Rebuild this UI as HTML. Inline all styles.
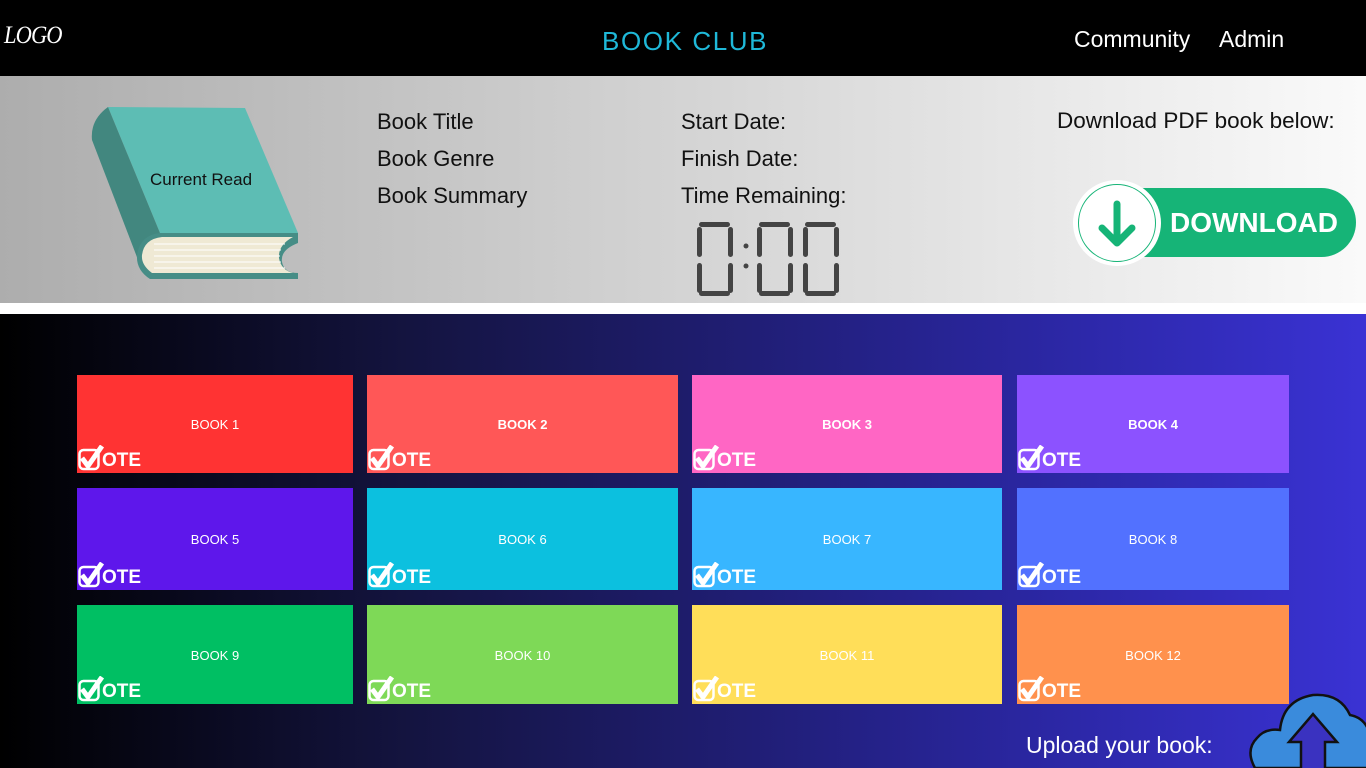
<!DOCTYPE html>
<html><head><meta charset="utf-8"><style>
*{margin:0;padding:0;box-sizing:border-box}
body{width:1366px;height:768px;overflow:hidden;position:relative;font-family:"Liberation Sans",sans-serif;background:#fff}
.hdr{position:absolute;left:0;top:0;width:1366px;height:76px;background:#000}
.band{position:absolute;left:0;top:76px;width:1366px;height:227px;background:linear-gradient(90deg,#adadad,#d0d0d0 45%,#fafafa)}
.dark{position:absolute;left:0;top:314px;width:1366px;height:454px;background:linear-gradient(90deg,#000 0%,#141440 30%,#2a26a0 75%,#3a32d4 100%)}
.t{position:absolute;white-space:nowrap}
.card{position:absolute;color:#fff;font-size:13px}
.card .n{position:absolute;left:0;right:0;text-align:center}
.vote{position:absolute;left:1px;bottom:2px;font-weight:bold;font-size:19px;display:flex;align-items:flex-end}
.vote svg{margin-right:-2px}
</style></head><body>
<div class="hdr"></div>
<div class="t" style="left:4px;top:22px;color:#fff;font-family:'Liberation Serif',serif;font-style:italic;font-size:25px;font-weight:100;letter-spacing:-1px;transform:scaleX(0.9);transform-origin:left">LOGO</div>
<div class="t" style="left:602px;top:26px;color:#1fb8d8;font-size:26px;letter-spacing:1.6px">BOOK CLUB</div>
<div class="t" style="left:1074px;top:26px;color:#fff;font-size:23px">Community</div>
<div class="t" style="left:1219px;top:26px;color:#fff;font-size:23px">Admin</div>
<div class="band"></div>
<svg style="position:absolute;left:88px;top:104px" width="215" height="180" viewBox="88 104 215 180">
<path d="M108 107 L245 108 L298 233 L160 233 Z" fill="#5dbdb4"/>
<path d="M108 107 Q90 120 92 140 L140 265 Q145 278 158 279 L160 233 Z" fill="#42877f"/>
<path d="M160 233 L298 233 L298 243 Q280 250 282 262 Q284 273 298 273 L298 279 L150 279 Q136 270 137 255 Q140 235 160 233 Z" fill="#468d86"/>
<path d="M162 237 L293 237 Q278 245 279 258 Q281 270 293 273 L152 273 Q141 265 142 255 Q144 239 162 237 Z" fill="#efe9d4"/>
<g stroke="#fff" stroke-width="1"><line x1="154" y1="244" x2="285" y2="244"/><line x1="154" y1="250" x2="281" y2="250"/><line x1="154" y1="256" x2="280" y2="256"/><line x1="154" y1="262" x2="281" y2="262"/><line x1="154" y1="268" x2="285" y2="268"/></g>
<text x="150" y="185" font-family="Liberation Sans" font-size="17" fill="#111">Current Read</text>
</svg>
<div class="t" style="left:377px;top:103px;font-size:22px;color:#111;line-height:37px">Book Title<br>Book Genre<br>Book Summary</div>
<div class="t" style="left:681px;top:103px;font-size:22px;color:#111;line-height:37px">Start Date:<br>Finish Date:<br>Time Remaining:</div>
<div class="t" style="left:1057px;top:108px;font-size:22.5px;color:#111">Download PDF book below:</div>
<svg style="position:absolute;left:695px;top:220px" width="152" height="80" viewBox="0 0 152 80" fill="#444">
<defs><g id="d"><rect x="4" y="2" width="31" height="5" rx="2.5"/><rect x="2" y="7" width="5" height="30" rx="2.5"/><rect x="2" y="43" width="5" height="30" rx="2.5"/><rect x="4" y="71" width="31" height="5" rx="2.5"/><rect x="33" y="7" width="5" height="30" rx="2.5"/><rect x="33" y="43" width="5" height="30" rx="2.5"/></g></defs>
<use href="#d"/>
<circle cx="51" cy="26" r="2.5"/><circle cx="51" cy="46" r="2.5"/>
<use href="#d" x="60"/>
<use href="#d" x="106"/>
</svg>
<div style="position:absolute;left:1110px;top:188px;width:246px;height:69px;background:#16b477;border-radius:35px"></div>
<div style="position:absolute;left:1073px;top:180px;width:88px;height:86px;border-radius:50%;background:#fff"></div>
<div style="position:absolute;left:1078px;top:184px;width:78px;height:78px;border-radius:50%;border:1px solid #16b477"></div>
<svg style="position:absolute;left:1096px;top:200px" width="42" height="50" viewBox="0 0 42 50"><path d="M21 4 V42 M6 28 L21 43 L36 28" stroke="#16b477" stroke-width="7" fill="none" stroke-linecap="round" stroke-linejoin="round"/></svg>
<div class="t" style="left:1170px;top:207px;color:#fff;font-weight:bold;font-size:28px">DOWNLOAD</div>
<div class="dark"></div>

<div id="cards"></div>
<div class="t" style="left:1026px;top:732px;color:#fff;font-size:23px">Upload your book:</div>
<svg style="position:absolute;left:1245px;top:690px" width="121" height="78" viewBox="0 0 121 78">
<path d="M10 78 Q0 60 12 48 Q20 38 35 40 Q38 10 68 5 Q95 3 105 25 Q121 28 125 45 L125 78 Z" fill="#3a8bdc" stroke="#111" stroke-width="2.5"/>
<path d="M56 78 V52 H44 L68 24 L92 52 H80 V78" fill="#3a32c0" stroke="#111" stroke-width="2.5"/>
</svg>
<script>
var cols=[[77,276],[367,311],[692,310],[1017,272]],rows=[[375,98],[488,102],[605,99]];
var colors=["#ff3333","#ff5757","#ff66c4","#8c52ff","#5e17eb","#0cc0df","#38b6ff","#5271ff","#00bf63","#7ed957","#ffde59","#ff914d"];
var bold=[0,1,1,1,0,0,0,0,0,0,0,0];
var h="";
for(var r=0;r<3;r++)for(var c=0;c<4;c++){var i=r*4+c;
h+='<div class="card" style="left:'+cols[c][0]+'px;top:'+rows[r][0]+'px;width:'+cols[c][1]+'px;height:'+rows[r][1]+'px;background:'+colors[i]+'"><div class="n" style="top:'+(rows[r][1]/2-7)+'px;'+(bold[i]?'font-weight:bold':'')+'">BOOK '+(i+1)+'</div><div class="vote"><svg width="26" height="26" viewBox="0 0 26 26"><rect x="1.5" y="5" width="19" height="19" rx="4" fill="none" stroke="#fff" stroke-width="2.5"/><path d="M4 13 L10 21 L24 1" stroke="#fff" stroke-width="5" fill="none" stroke-linejoin="round"/></svg><span style="line-height:20px">OTE</span></div></div>';}
document.getElementById("cards").innerHTML=h;
</script>
</body></html>
